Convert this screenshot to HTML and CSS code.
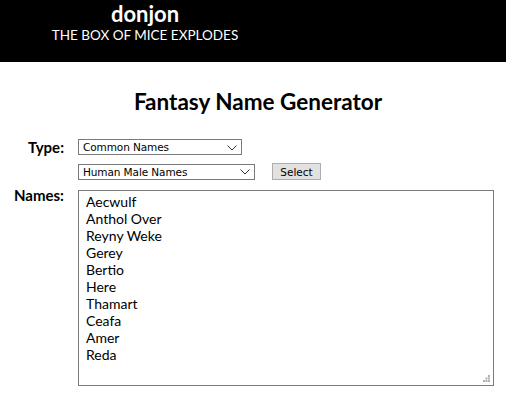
FILE: index.html
```html
<!DOCTYPE html>
<html>
<head>
<meta charset="utf-8">
<link rel="stylesheet" href="styles.css">
</head>
<body>
<header class="banner">
  <div class="brand">
    <div class="brand-name">donjon</div>
    <div class="brand-tag">THE BOX OF MICE EXPLODES</div>
  </div>
</header>
<main class="content">
  <h1 class="title">Fantasy Name Generator</h1>
  <div class="form">
    <div class="label label-type">Type:</div>
    <div class="row">
      <div class="select select-1"><span>Common Names</span><svg class="chev" width="10" height="6" viewBox="0 0 10 6"><path d="M0.5 0.5 L5 5 L9.5 0.5" fill="none" stroke="#333" stroke-width="1"/></svg></div>
    </div>
    <div class="label"></div>
    <div class="row">
      <div class="select select-2"><span>Human Male Names</span><svg class="chev" width="10" height="6" viewBox="0 0 10 6"><path d="M0.5 0.5 L5 5 L9.5 0.5" fill="none" stroke="#333" stroke-width="1"/></svg></div>
      <button class="btn">Select</button>
    </div>
    <div class="label label-names">Names:</div>
    <div class="names">
      <div>Aecwulf</div>
      <div>Anthol Over</div>
      <div>Reyny Weke</div>
      <div>Gerey</div>
      <div>Bertio</div>
      <div>Here</div>
      <div>Thamart</div>
      <div>Ceafa</div>
      <div>Amer</div>
      <div>Reda</div>
      <svg class="grip" width="7" height="7" viewBox="0 0 7 7"><g fill="#b0b0b0"><rect x="5" y="0" width="2" height="2"/><rect x="2.5" y="2.5" width="2" height="2"/><rect x="5" y="2.5" width="2" height="2"/><rect x="0" y="5" width="2" height="2"/><rect x="2.5" y="5" width="2" height="2"/><rect x="5" y="5" width="2" height="2"/></g></svg>
    </div>
  </div>
</main>
</body>
</html>
```

FILE: styles.css
```css
* { box-sizing: border-box; }
body {
  margin: 0;
  background: #fff;
  color: #000;
  font-family: Lato, "Open Sans", sans-serif;
}
.banner {
  background: #000;
  height: 62px;
  color: #fff;
}
.brand {
  width: 290px;
  text-align: center;
  padding-top: 2px;
}
.brand-name {
  font-weight: bold;
  font-size: 22px;
  line-height: 24px;
}
.brand-tag {
  font-size: 13.5px;
  line-height: 18px;
}
.content {
  padding-top: 26px;
}
.title {
  margin: 0;
  text-align: center;
  font-size: 22.5px;
  line-height: 28px;
  font-weight: bold;
  padding-left: 10px;
}
.form {
  display: grid;
  grid-template-columns: 64px 1fr;
  column-gap: 14px;
  row-gap: 8px;
  margin-top: 23px;
}
.label {
  text-align: right;
  font-weight: bold;
  font-size: 15px;
  line-height: 16px;
}
.label-names { margin-top: -1px; }
.row {
  display: flex;
  align-items: center;
  gap: 17px;
}
.select {
  height: 16px;
  border: 1px solid #7a7a7a;
  background: #fff;
  display: flex;
  align-items: center;
  justify-content: space-between;
  padding: 0 4px 0 4px;
  font-family: "DejaVu Sans", sans-serif;
  font-size: 10.5px;
  letter-spacing: -0.1px;
  color: #000;
}
.select-1 { width: 164px; }
.select-2 { width: 177px; }
.chev { margin-top: 1px; }
.btn {
  width: 49px;
  height: 17px;
  padding: 0;
  background: #e1e1e1;
  border: 1px solid #adadad;
  font-family: "DejaVu Sans", sans-serif;
  font-size: 10.5px;
  color: #000;
}
.names {
  position: relative;
  margin-top: 2px;
  width: 416px;
  height: 196px;
  border: 1px solid #7a7a7a;
  padding: 2px 7px;
  font-size: 14px;
  line-height: 17px;
}
.grip {
  position: absolute;
  right: 3px;
  bottom: 3px;
}
```
